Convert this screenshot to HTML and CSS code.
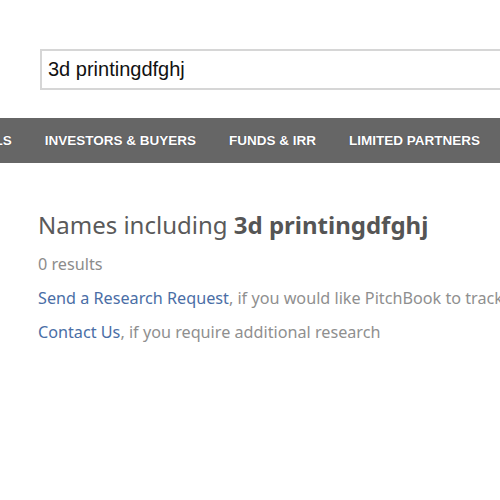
FILE: index.html
```html
<!DOCTYPE html>
<html lang="en">
<head>
<meta charset="utf-8">
<title>Search results</title>
<link rel="stylesheet" href="styles.css">
</head>
<body>
<header class="search">
  <input class="search-input" type="text" value="3d printingdfghj">
</header>
<nav class="nav">
  <ul class="nav-list">
    <li class="nav-item">DEALS</li>
    <li class="nav-item">INVESTORS &amp; BUYERS</li>
    <li class="nav-item">FUNDS &amp; IRR</li>
    <li class="nav-item">LIMITED PARTNERS</li>
    <li class="nav-item">SERVICE PROVIDERS</li>
  </ul>
</nav>
<main class="results">
  <h1 class="results-title">Names including <strong>3d printingdfghj</strong></h1>
  <p class="results-count">0 results</p>
  <p class="results-line"><a class="link" href="#">Send a Research Request</a>, if you would like PitchBook to track this company</p>
  <p class="results-line"><a class="link" href="#">Contact Us</a>, if you require additional research</p>
</main>
</body>
</html>
```
FILE: styles.css
```css
html, body {
  margin: 0;
  padding: 0;
  background: #fff;
  overflow: hidden;
  width: 500px;
  height: 500px;
}
body {
  font-family: "Noto Sans", "DejaVu Sans", sans-serif;
}
.search {
  padding: 49px 0 0 40px;
}
.search-input {
  display: block;
  box-sizing: border-box;
  width: 640px;
  height: 41px;
  margin: 0;
  padding: 0 0 1px 6px;
  border: 2px solid #d6d6d6;
  border-radius: 0;
  background: #fff;
  font-family: "Liberation Sans", Arial, sans-serif;
  font-size: 20px;
  color: #111;
  outline: none;
}
.nav {
  margin-top: 28px;
  height: 45px;
  background: #666;
  overflow: hidden;
}
.nav-list {
  display: flex;
  list-style: none;
  margin: 0 0 0 -50.5px;
  padding: 0;
  height: 100%;
  align-items: center;
  white-space: nowrap;
}
.nav-item {
  padding: 0 16.5px;
  font-family: "Liberation Sans", Arial, sans-serif;
  font-weight: bold;
  font-size: 13.5px;
  color: #fff;
  text-shadow: 0 0 1px rgba(40, 40, 60, 0.7);
}
.results {
  padding: 46px 0 0 38px;
  white-space: nowrap;
}
.results-title {
  margin: 0;
  font-size: 24px;
  line-height: 32px;
  font-weight: normal;
  color: #5a5a5a;
}
.results-title strong {
  font-weight: bold;
  color: #555;
}
.results-count {
  margin: 11px 0 0;
  font-size: 16.2px;
  line-height: 24px;
  color: #8c8c8c;
}
.results-line {
  margin: 10px 0 0;
  font-size: 16.2px;
  line-height: 24px;
  color: #8f8f8f;
}
.link {
  color: #4a6ea6;
  text-decoration: none;
}
```
